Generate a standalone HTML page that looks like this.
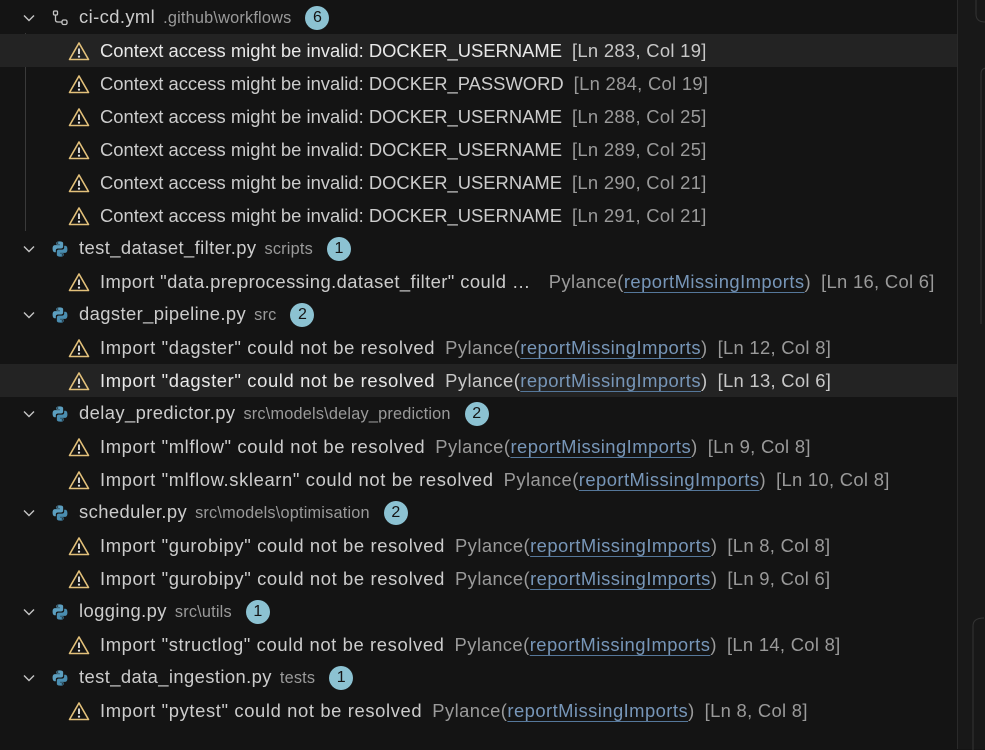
<!DOCTYPE html>
<html><head><meta charset="utf-8"><style>
body{margin:0;width:985px;height:749px;background:#141414;overflow:hidden;font-family:"Segoe UI","Liberation Sans",sans-serif;font-size:18.4px;color:#cccccc;position:relative}
.panel{position:absolute;left:0;top:0;width:957px;height:749px;background:#141414}
.side{position:absolute;left:957px;top:0;width:28px;height:749px;background:#181818;border-left:1px solid #2a2a2a}
.row{position:absolute;left:0;width:957px;height:33px;display:flex;align-items:center;white-space:nowrap}
.sel{background:#232323;color:#e8e8e8}
.hd .chev{position:absolute;left:22px;top:10px}
.hd .ico{position:absolute;left:51px;top:8px}
.hd .fn{position:absolute;left:79px;display:flex;align-items:baseline;letter-spacing:0.4px}
.desc{color:#9a9a9a;font-size:16.3px;margin-left:8px;letter-spacing:0.2px}
.badge{display:inline-block;width:24px;height:24px;border-radius:50%;background:#8cc2d2;color:#141414;font-size:16px;text-align:center;line-height:24px;margin-left:14px;align-self:center;letter-spacing:0}
.it .w{position:absolute;left:68px;top:7px}
.it .m{position:absolute;left:100px;display:flex;align-items:center}
.imp{letter-spacing:0.62px}
.src{color:#9a9a9a;margin-left:10px;letter-spacing:0.45px}
.lnk{color:#7796b8;text-decoration:underline;text-decoration-color:#55779a;text-underline-offset:4px}
.pos{color:#9a9a9a;margin-left:10px;letter-spacing:0.3px}
.sel .pos,.sel .src{color:#c8c8c8}
.guide{position:absolute;left:25px;top:33px;width:1px;height:198px;background:#3a3a3a}
</style></head><body>
<div class="panel"></div>
<div class="side"></div>
<svg style="position:absolute;left:975px;top:0" width="12" height="24"><path d="M1 0 V14 Q1 22 10 22" fill="none" stroke="#333" stroke-width="1"/></svg>
<svg style="position:absolute;left:980px;top:66px" width="8" height="260"><path d="M1 258 V8 Q1 2 7 2" fill="none" stroke="#333"/></svg>
<svg style="position:absolute;left:972px;top:610px" width="14" height="140"><path d="M1 140 V16 Q1 8 12 8" fill="none" stroke="#333"/></svg>
<div class="guide"></div>
<div id="c"></div>
<script>
const chev='<svg class="chev" width="14" height="14" viewBox="0 0 14 14"><path d="M2 4.5 L7 9.5 L12 4.5" fill="none" stroke="#c5c5c5" stroke-width="1.4"/></svg>';
const py='<svg class="ico" width="18" height="18" viewBox="0 0 16 16"><path d="M7.8 1.2c-3.2 0-3 1.4-3 1.4v1.5h3.1v.5H3.5S1.4 4.4 1.4 7.7s1.8 3.2 1.8 3.2h1.1V9.3s-.1-1.8 1.8-1.8h3c0 0 1.7 0 1.7-1.7V3s.3-1.8-3-1.8z" fill="#5c9fc0"/><path d="M8.2 14.8c3.2 0 3-1.4 3-1.4v-1.5H8.1v-.5h4.4s2.1.2 2.1-3.1-1.8-3.2-1.8-3.2h-1.1v1.6s.1 1.8-1.8 1.8h-3S5.2 8.5 5.2 10.2V13s-.3 1.8 3 1.8z" fill="#4a8db0"/><circle cx="5.9" cy="2.7" r=".6" fill="#141414"/><circle cx="10.1" cy="13.3" r=".6" fill="#141414"/></svg>';
const yml='<svg class="ico" width="20" height="20" viewBox="0 0 20 20"><rect x="2.5" y="2" width="4" height="4" rx="1" fill="none" stroke="#c5c5c5" stroke-width="1.3"/><rect x="11" y="11" width="5" height="4.5" rx="1.5" fill="none" stroke="#c5c5c5" stroke-width="1.3"/><path d="M4.5 6 V11 Q4.5 13 7 13 H11" fill="none" stroke="#c5c5c5" stroke-width="1.3"/></svg>';
const warn='<svg class="w" width="22" height="20" viewBox="0 0 22 20"><path d="M11 2 L20.5 18.5 H1.5 Z" fill="none" stroke="#e2c07a" stroke-width="1.6" stroke-linejoin="round"/><path d="M11 7.5 V13" stroke="#e8e8e8" stroke-width="1.8"/><circle cx="11" cy="15.6" r="1.1" fill="#e8e8e8"/></svg>';
const rows=[
['h','ci-cd.yml','.github\\workflows','6',yml],
['i','Context access might be invalid: DOCKER_USERNAME','','[Ln 283, Col 19]',1],
['i','Context access might be invalid: DOCKER_PASSWORD','','[Ln 284, Col 19]'],
['i','Context access might be invalid: DOCKER_USERNAME','','[Ln 288, Col 25]'],
['i','Context access might be invalid: DOCKER_USERNAME','','[Ln 289, Col 25]'],
['i','Context access might be invalid: DOCKER_USERNAME','','[Ln 290, Col 21]'],
['i','Context access might be invalid: DOCKER_USERNAME','','[Ln 291, Col 21]'],
['h','test_dataset_filter.py','scripts','1',py],
['i','Import "data.preprocessing.dataset_filter" could …','p','[Ln 16, Col 6]',0,1],
['h','dagster_pipeline.py','src','2',py],
['i','Import "dagster" could not be resolved','p','[Ln 12, Col 8]'],
['i','Import "dagster" could not be resolved','p','[Ln 13, Col 6]',1],
['h','delay_predictor.py','src\\models\\delay_prediction','2',py],
['i','Import "mlflow" could not be resolved','p','[Ln 9, Col 8]'],
['i','Import "mlflow.sklearn" could not be resolved','p','[Ln 10, Col 8]'],
['h','scheduler.py','src\\models\\optimisation','2',py],
['i','Import "gurobipy" could not be resolved','p','[Ln 8, Col 8]'],
['i','Import "gurobipy" could not be resolved','p','[Ln 9, Col 6]'],
['h','logging.py','src\\utils','1',py],
['i','Import "structlog" could not be resolved','p','[Ln 14, Col 8]'],
['h','test_data_ingestion.py','tests','1',py],
['i','Import "pytest" could not be resolved','p','[Ln 8, Col 8]'],
];
let h='';
rows.forEach((r,i)=>{
 const t=i*33+1;
 if(r[0]=='h'){
  h+=`<div class="row hd" style="top:${t}px">${chev}${r[4]}<span class="fn">${r[1]}<span class="desc">${r[2]}</span><span class="badge">${r[3]}</span></span></div>`;
 }else{
  const src=r[2]?`<span class="src" style="${r[5]?'margin-left:18px':''}">Pylance(<span class="lnk">reportMissingImports</span>)</span>`:'';
  h+=`<div class="row it${r[4]?' sel':''}" style="top:${t}px">${warn}<span class="m"><span class="${r[2]?'imp':''}" style="${r[5]?'letter-spacing:0.42px':''}">${r[1]}</span>${src}<span class="pos">${r[3]}</span></span></div>`;
 }
});
document.getElementById('c').innerHTML=h;
</script>
</body></html>
